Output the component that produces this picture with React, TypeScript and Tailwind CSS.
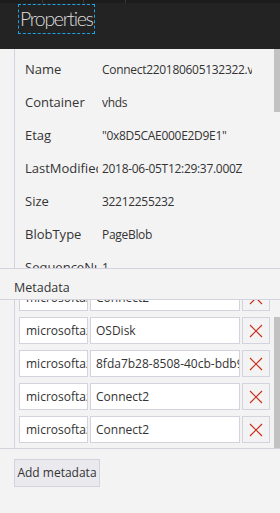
const props: [string, string][] = [
  ["Name", "Connect220180605132322.vhd"],
  ["Container", "vhds"],
  ["Etag", "\"0x8D5CAE000E2D9E1\""],
  ["LastModified", "2018-06-05T12:29:37.000Z"],
  ["Size", "32212255232"],
  ["BlobType", "PageBlob"],
  ["SequenceNumber", "1"],
];

const meta: [string, string][] = [
  ["microsoftazurecompute_ResourceGroupName", "Connect2"],
  ["microsoftazurecompute_DiskType", "OSDisk"],
  ["microsoftazurecompute_VMId", "8fda7b28-8508-40cb-bdb9-3a1e2c4f7d10"],
  ["microsoftazurecompute_VMName", "Connect2"],
  ["microsoftazurecompute_DiskName", "Connect2"],
];

function CloseIcon() {
  return (
    <svg width="14" height="14" viewBox="0 0 14 14" fill="none">
      <path d="M1 1L13 13M13 1L1 13" stroke="#c9301c" strokeWidth="1.2" />
    </svg>
  );
}

function MetaRow({ k, v }: { k: string; v: string }) {
  return (
    <div className="flex h-[27px] gap-[2px]">
      <div className="w-[69px] shrink-0 overflow-hidden whitespace-nowrap border border-[#d3d3e0] bg-white pl-[6px] leading-[25px]">
        {k}
      </div>
      <div className="w-[150px] shrink-0 overflow-hidden whitespace-nowrap border border-[#d3d3e0] bg-white pl-[5px] leading-[25px]">
        {v}
      </div>
      <div className="flex w-[28px] shrink-0 items-center justify-center border border-[#d3d3e0] bg-[#f3f3f3]">
        <CloseIcon />
      </div>
    </div>
  );
}

export default function App() {
  return (
    <div
      className="flex h-[513px] w-[280px] flex-col overflow-hidden bg-[#f3f3f3] text-[12px] text-[#333]"
      style={{ fontFamily: "'Open Sans', 'Noto Sans', sans-serif" }}
    >
      <div className="h-[49px] shrink-0 bg-[#232323]">
        <div className="flex h-[3px] bg-[#1c1c1c]">
          <div className="w-[43px] border-r border-[#3a3a3a]" />
          <div className="w-[41px] border-r border-[#3a3a3a]" />
          <div className="w-[42px] border-r border-[#3a3a3a]" />
        </div>
        <div
          className="ml-[18px] mt-[1px] inline-block h-[30px] border border-dashed border-[#1ca3e4] pl-[1px] pr-[1px] text-[19.5px] font-light leading-[27px] tracking-[-1.3px] text-[#dcdcdc]"
          style={{ fontFamily: "Lato, 'Open Sans', sans-serif" }}
        >
          Properties
        </div>
      </div>

      <div className="flex h-[220px] shrink-0 border-b border-[#d3d3e0]">
        <div className="ml-[14px] flex-1 overflow-hidden border-l border-[#d3d3e0] pl-[10px] pt-[4px]">
          {props.map(([k, v]) => (
            <div key={k} className="flex h-[33px] items-center whitespace-nowrap">
              <div className="mr-[4px] w-[73px] shrink-0 overflow-hidden text-[13px]">{k}</div>
              <div className="w-[150px] shrink-0 overflow-hidden tracking-[-0.3px]">{v}</div>
            </div>
          ))}
        </div>
        <div className="w-[6px] shrink-0">
          <div className="h-[63px] bg-[#c2c2c2]" />
        </div>
      </div>

      <div className="ml-[14px] mt-[11px] h-[19px] text-[12.5px] leading-[16px]">Metadata</div>

      <div className="flex h-[150px] shrink-0 border-y border-[#d3d3e0]">
        <div className="ml-[14px] flex-1 overflow-hidden border-l border-[#d3d3e0] pl-[4px]">
          <div className="-mt-[16px] flex flex-col gap-[6px]">
            {meta.map(([k, v], i) => (
              <MetaRow key={i} k={k} v={v} />
            ))}
          </div>
        </div>
        <div className="flex w-[6px] shrink-0 flex-col justify-end">
          <div className="h-[131px] bg-[#c2c2c2]" />
        </div>
      </div>

      <div className="ml-[14px] mt-[10px]">
        <button className="h-[28px] w-[86px] border border-[#d3d3e0] bg-[#e9e9ee] text-[12px] text-[#333]">
          Add metadata
        </button>
      </div>
    </div>
  );
}
